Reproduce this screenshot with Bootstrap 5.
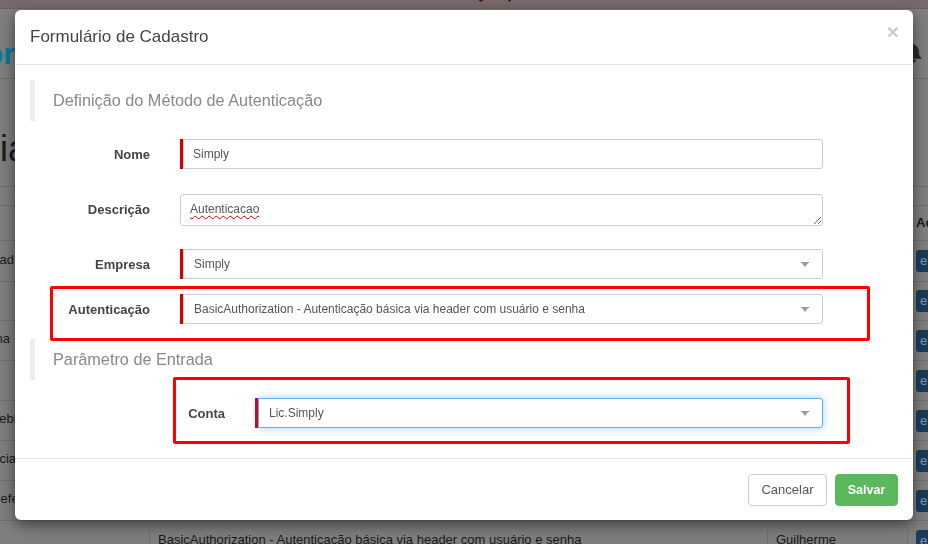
<!DOCTYPE html>
<html lang="pt-BR">
<head>
<meta charset="utf-8">
<title>Formulário de Cadastro</title>
<link rel="stylesheet" href="https://cdn.jsdelivr.net/npm/bootstrap@5.3.0/dist/css/bootstrap.min.css">
<style>
html,body{height:544px;overflow:hidden}
body{font-family:"Liberation Sans",Arial,sans-serif;color:#1a1a1a;background:#7f7f7f;font-size:13px}
.pg-band{border-bottom:1px solid #6e6e6e;overflow:hidden}
.pg-strip{width:15px;flex:none;white-space:nowrap;overflow:visible}
.pg-top{height:9px;background:#776a6a;border-bottom-color:#6c6262;padding-left:479px}
.pg-top svg{display:block}
.h-70{height:70px}.h-108{height:108px}.h-19{height:19px}.h-35{height:35px}.h-41{height:41px}.h-39{height:39px}.h-40{height:40px}
.pg-logo{font-size:30px;color:#067c9e;font-weight:700;padding-top:22px}
.pg-title{font-size:36px;line-height:1;color:#1a1a1a;font-weight:500;padding-top:52px;margin-right:-13px}
.pg-txt{padding-bottom:3px}
.pg-sh-a{margin-right:1px}.pg-sh-b{margin-right:5px}.pg-sh-c{margin-right:-6px}.pg-sh-d{margin-right:-1px}.pg-sh-e{margin-right:-8px}
.pg-act{width:12px;height:22px;background:#1a3d5b;color:#7f9cb5;border-radius:3px 0 0 3px;padding-left:4px;line-height:22px;font-size:13px;margin-left:3px}
.pg-head{padding-left:3px;font-weight:700;font-size:13px;padding-top:9px;line-height:16px}
.pg-last{height:24px;overflow:hidden;padding-top:9px}
.pg-c1{width:149px;flex:none}
.pg-c2{width:618px;flex:none;border-left:1px solid #6e6e6e;padding-left:8px}
.pg-c3{width:140px;flex:none;border-left:1px solid #6e6e6e;padding-left:8px}
.pg-c4{flex:none;width:21px;border-left:1px solid #6e6e6e;padding-left:5px}
.pg-bell{margin:35px 0 0 -9px;display:block}
.fx-modal{position:fixed;top:0;left:0;width:100%;height:100%;z-index:1055;overflow:hidden}
.fx-dialog{margin:10px 15px;width:898px;max-width:none}
.fx-content{height:510px;border:0;border-radius:6px;background:#fff;box-shadow:0 5px 15px rgba(0,0,0,.5)}
.fx-header{height:55px;padding:0 15px;border-bottom:1px solid #e5e5e5;border-radius:6px 6px 0 0}
.fx-title{font-size:17px;color:#444;font-weight:400;margin:0;line-height:52px}
.fx-close{background:none;border:0;padding:0;font-size:21px;font-weight:700;color:#ccc;line-height:1;align-self:flex-start;margin:11px -1px 0 0}
.fx-body{padding:15px 15px 30px;flex:0 0 auto;height:393px;position:relative}
.fx-note{height:41px;border-left:5px solid #eee;padding-left:18px;font-size:16.25px;color:#888;line-height:41px}
.fx-row{display:flex;height:30px;align-items:center}
.fx-gap25{margin-top:25px}.fx-gap15{margin-top:15px}.fx-gap18{margin-top:18px}
.fx-lbl{width:120px;margin:2px 30px 0 0;text-align:right;font-weight:700;font-size:13px;color:#444;flex:none}
.fx-lbl-wide{width:195px}
.fx-bar{display:flex;flex:none;width:643px;height:30px}
.fx-bar::before{content:"";width:3px;flex:none;background:#d40000;position:relative;z-index:1}
.fx-bar-wide{width:568px}
.fx-bar-wide::before{background:#b8102c}
.fx-plain::before{display:none}
.fx-ctl{flex:1;width:100%;height:30px;min-height:30px;font-size:12px;color:#555;padding:0 10px;border:1px solid #ccc;border-radius:0 3px 3px 0;box-shadow:none;font-family:"Liberation Sans",Arial,sans-serif;background-color:#fff}
.fx-inp{padding-left:9px}
.fx-area{border-radius:3px;padding:7px 9px 0;line-height:15px;resize:vertical;overflow:hidden;text-decoration:underline wavy #d00000 1px;text-underline-offset:2px}
.fx-sel{appearance:none;background-repeat:no-repeat;background-position:right 13px center;background-size:8px 5px;background-image:url("data:image/svg+xml,%3Csvg xmlns='http://www.w3.org/2000/svg' viewBox='0 0 8 5'%3E%3Cpath fill='%23999' d='M0 0h8v1H7L4 5 1 1H0z'/%3E%3C/svg%3E")}
.fx-focus{border-color:#66afe9;box-shadow:0 0 8px rgba(102,175,233,.6)}
.fx-mark{position:absolute;border:3px solid #f00;border-radius:2px;pointer-events:none}
.fx-mark-a{left:35px;top:221px;width:820px;height:55px}
.fx-mark-b{left:158px;top:312px;width:677px;height:67px}
.fx-footer{height:62px;padding:15px;border-top:1px solid #e5e5e5;gap:8px;justify-content:flex-end;align-items:flex-start;flex-wrap:nowrap}
.fx-cancel,.fx-save{height:32px;margin:0;padding:0;border-radius:4px;line-height:30px}
.fx-cancel{width:79px;color:#555;background:#fff;border:1px solid #ccc;font-size:13px}
.fx-save{width:63px;color:#fff;background:#5cb85c;border:1px solid #5cb85c;font-weight:700;font-size:12.5px}
</style>
</head>
<body>
<div>
  <div class="pg-band pg-top"><svg width="32" height="2" viewBox="0 0 32 2"><path fill="#5a1414" d="M0 0h4v1H2v1H1V1H0zM29 0h3v1h-1v1h-1V1h-1z"/></svg></div>
  <div class="pg-band h-70 d-flex justify-content-between">
    <div class="pg-strip d-flex justify-content-end pg-logo"><span>or</span></div>
    <div class="pg-strip"><svg class="pg-bell" width="20" height="20" viewBox="0 0 15 19"><path fill="#2a2a2a" d="M7.500 0c.8 0 1.200.7 1.200 1.500C11 2.300 12 4.500 12 7c0 3.500 1 5 3 7H0c2-2 3-3.500 3-7 0-2.500 1-4.700 3.300-5.500C6.300.7 6.700 0 7.500 0zM5.500 15h4c0 1.500-1 2.500-2 2.500s-2-1-2-2.500z"/></svg></div>
  </div>
  <div class="pg-band h-108 d-flex justify-content-between">
    <div class="pg-strip d-flex justify-content-end"><span class="pg-title">cia</span></div>
    <div class="pg-strip"></div>
  </div>
  <div class="pg-band h-19"></div>
  <div class="pg-band h-35 d-flex justify-content-between">
    <div class="pg-strip"></div>
    <div class="pg-strip pg-head">Ac</div>
  </div>
  <div class="pg-band h-41 d-flex justify-content-between align-items-center">
    <div class="pg-strip d-flex justify-content-end pg-txt"><span class="pg-sh-a">ad</span></div><div class="pg-strip"><div class="pg-act">e</div></div>
  </div>
  <div class="pg-band h-39 d-flex justify-content-between align-items-center">
    <div class="pg-strip"></div><div class="pg-strip"><div class="pg-act">e</div></div>
  </div>
  <div class="pg-band h-40 d-flex justify-content-between align-items-center">
    <div class="pg-strip d-flex justify-content-end pg-txt"><span class="pg-sh-b">na</span></div><div class="pg-strip"><div class="pg-act">e</div></div>
  </div>
  <div class="pg-band h-40 d-flex justify-content-between align-items-center">
    <div class="pg-strip"></div><div class="pg-strip"><div class="pg-act">e</div></div>
  </div>
  <div class="pg-band h-40 d-flex justify-content-between align-items-center">
    <div class="pg-strip d-flex justify-content-end pg-txt"><span class="pg-sh-c">ebh</span></div><div class="pg-strip"><div class="pg-act">e</div></div>
  </div>
  <div class="pg-band h-40 d-flex justify-content-between align-items-center">
    <div class="pg-strip d-flex justify-content-end pg-txt"><span class="pg-sh-d">cia</span></div><div class="pg-strip"><div class="pg-act">e</div></div>
  </div>
  <div class="pg-band h-40 d-flex justify-content-between align-items-center">
    <div class="pg-strip d-flex justify-content-end pg-txt"><span class="pg-sh-e">efer</span></div><div class="pg-strip"><div class="pg-act">e</div></div>
  </div>
  <div class="pg-last d-flex">
    <div class="pg-c1"></div>
    <div class="pg-c2 text-nowrap">BasicAuthorization - Autenticação básica via header com usuário e senha</div>
    <div class="pg-c3">Guilherme</div>
    <div class="pg-c4"><div class="pg-act">e</div></div>
  </div>
</div>

<div class="fx-modal" tabindex="-1">
  <div class="fx-dialog">
    <div class="modal-content fx-content">
      <div class="modal-header fx-header justify-content-between">
        <h5 class="modal-title fx-title">Formulário de Cadastro</h5>
        <button type="button" class="fx-close" aria-label="Fechar">×</button>
      </div>
      <form class="modal-body fx-body">
        <div class="fx-note">Definição do Método de Autenticação</div>
        <div class="fx-row fx-gap18">
          <label class="fx-lbl">Nome</label>
          <div class="fx-bar"><input class="form-control fx-ctl fx-inp" value="Simply"></div>
        </div>
        <div class="fx-row fx-gap25">
          <label class="fx-lbl">Descrição</label>
          <div class="fx-bar fx-plain"><textarea class="form-control fx-ctl fx-area" rows="1">Autenticacao</textarea></div>
        </div>
        <div class="fx-row fx-gap25">
          <label class="fx-lbl">Empresa</label>
          <div class="fx-bar"><select class="form-select fx-ctl fx-sel"><option>Simply</option></select></div>
        </div>
        <div class="fx-row fx-gap15">
          <label class="fx-lbl">Autenticação</label>
          <div class="fx-bar"><select class="form-select fx-ctl fx-sel"><option>BasicAuthorization - Autenticação básica via header com usuário e senha</option></select></div>
        </div>
        <div class="fx-note fx-gap15">Parâmetro de Entrada</div>
        <div class="fx-row fx-gap18">
          <label class="fx-lbl fx-lbl-wide">Conta</label>
          <div class="fx-bar fx-bar-wide"><select class="form-select fx-ctl fx-sel fx-focus"><option>Lic.Simply</option></select></div>
        </div>
        <div class="fx-mark fx-mark-a"></div>
        <div class="fx-mark fx-mark-b"></div>
      </form>
      <div class="modal-footer fx-footer">
        <button type="button" class="btn fx-cancel">Cancelar</button>
        <button type="button" class="btn fx-save">Salvar</button>
      </div>
    </div>
  </div>
</div>
<script src="https://cdn.jsdelivr.net/npm/bootstrap@5.3.0/dist/js/bootstrap.bundle.min.js"></script>
</body>
</html>
